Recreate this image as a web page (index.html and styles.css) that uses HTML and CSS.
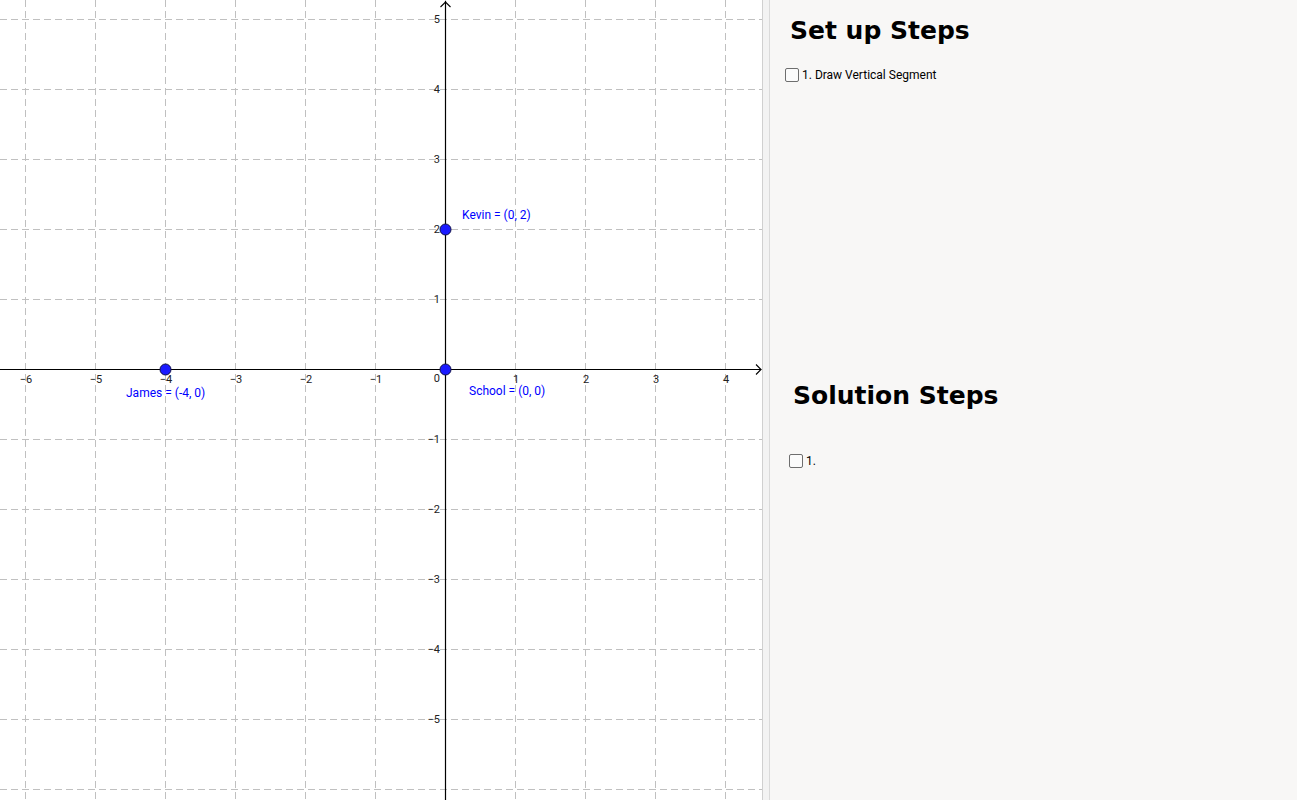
FILE: index.html
```html
<!DOCTYPE html>
<html lang="en">
<head>
  <meta charset="UTF-8" />
  <meta name="viewport" content="width=device-width, initial-scale=1.0"/>
  <title>Distance Problem</title>
  <link rel="stylesheet" href="styles.css">
</head>
<body>

<div class="app">
  <div class="graphics">
    <svg id="plot" width="762" height="800" viewBox="0 0 762 800"></svg>
  </div>
  <div class="divider"></div>
  <div class="panel">
    <div class="section setup">
      <h2>Set up Steps</h2>
      <div class="step"><span class="box"></span>1. Draw Vertical Segment</div>
    </div>
    <div class="section solution">
      <h2>Solution Steps</h2>
      <div class="step"><span class="box"></span>1.</div>
    </div>
  </div>
</div>

<script>
  const svg = document.getElementById("plot");
  const ns = "http://www.w3.org/2000/svg";
  const unit = 70;
  const ox = 445, oy = 369;

  function add(tag, attrs, text) {
    const el = document.createElementNS(ns, tag);
    for (const k in attrs) el.setAttribute(k, attrs[k]);
    if (text) el.textContent = text;
    svg.appendChild(el);
    return el;
  }

  // grid
  for (let k = -6; k <= 4; k++) {
    const x = ox + k * unit + 0.5;
    add("line", { x1: x, y1: 0, x2: x, y2: 800, class: "grid" });
  }
  for (let k = -6; k <= 5; k++) {
    const y = oy - k * unit + 0.5;
    add("line", { x1: 0, y1: y, x2: 762, y2: y, class: "grid" });
  }

  // axes
  add("line", { x1: 0, y1: oy + 0.5, x2: 761, y2: oy + 0.5, class: "axis" });
  add("line", { x1: ox + 0.5, y1: 800, x2: ox + 0.5, y2: 1, class: "axis" });
  add("polyline", { points: `756,${oy - 4.5} 761,${oy + 0.5} 756,${oy + 5.5}`, class: "arrow" });
  add("polyline", { points: `${ox - 4.5},7 ${ox + 0.5},2 ${ox + 5.5},7`, class: "arrow" });

  // tick labels
  for (let k = -6; k <= 4; k++) {
    if (k === 0) continue;
    const label = k < 0 ? "\u2212" + (-k) : String(k);
    add("text", { x: ox + k * unit + 1, y: 383, class: "tick", "text-anchor": "middle" }, label);
  }
  for (let k = -5; k <= 5; k++) {
    if (k === 0) continue;
    const label = k < 0 ? "\u2212" + (-k) : String(k);
    add("text", { x: 440, y: oy - k * unit + 4, class: "tick", "text-anchor": "end" }, label);
  }
  add("text", { x: 440, y: 382, class: "tick", "text-anchor": "end" }, "0");

  // points
  const points = [
    { x: -4, y: 0, label: "James = (-4, 0)", lx: 126, ly: 397 },
    { x: 0, y: 2, label: "Kevin = (0, 2)", lx: 462, ly: 219 },
    { x: 0, y: 0, label: "School = (0, 0)", lx: 469, ly: 395 }
  ];
  points.forEach(p => {
    add("circle", { cx: ox + p.x * unit + 0.5, cy: oy - p.y * unit + 0.5, r: 5.5, class: "point" });
    add("text", { x: p.lx, y: p.ly, class: "plabel" }, p.label);
  });
</script>

</body>
</html>
```

FILE: styles.css
```css
* {
  box-sizing: border-box;
}

body {
  margin: 0;
  font-family: Roboto, "Liberation Sans", sans-serif;
  background-color: #ffffff;
}

.app {
  display: flex;
  height: 800px;
  overflow: hidden;
}

.graphics {
  width: 762px;
  flex-shrink: 0;
  background-color: #ffffff;
}

.graphics svg {
  display: block;
}

.grid {
  stroke: #c0c0c0;
  stroke-width: 1;
  stroke-dasharray: 7 4;
}

.axis {
  stroke: #000000;
  stroke-width: 1.2;
}

.arrow {
  fill: none;
  stroke: #000000;
  stroke-width: 1.1;
}

.tick {
  font-family: Roboto, "Liberation Sans", sans-serif;
  font-size: 11px;
  fill: #222222;
}

.point {
  fill: #1a1aff;
  stroke: #101040;
  stroke-width: 1;
}

.plabel {
  font-family: Roboto, "Liberation Sans", sans-serif;
  font-size: 12px;
  fill: #0000ff;
}

.divider {
  width: 8px;
  flex-shrink: 0;
  background-color: #f3f3f3;
  border-left: 1px solid #d0d0d0;
  border-right: 1px solid #dadada;
}

.panel {
  flex: 1;
  background-color: #f8f7f6;
  padding: 16px 0 0 20px;
}

.section h2 {
  margin: 0;
  font-family: "DejaVu Sans", sans-serif;
  font-weight: bold;
  font-size: 25px;
  line-height: 30px;
  color: #000000;
}

.setup {
  height: 365px;
}

.setup .step {
  margin-top: 20px;
  margin-left: -5px;
}

.solution h2 {
  margin-left: 3px;
}

.solution .step {
  margin-top: 41px;
  margin-left: -1px;
}

.step {
  display: flex;
  align-items: center;
  height: 18px;
  font-size: 12px;
  color: #000000;
}

.box {
  width: 14px;
  height: 14px;
  margin-right: 3px;
  border: 1px solid #6e6e6e;
  border-radius: 2px;
  background-color: #fbfbfb;
}
```
